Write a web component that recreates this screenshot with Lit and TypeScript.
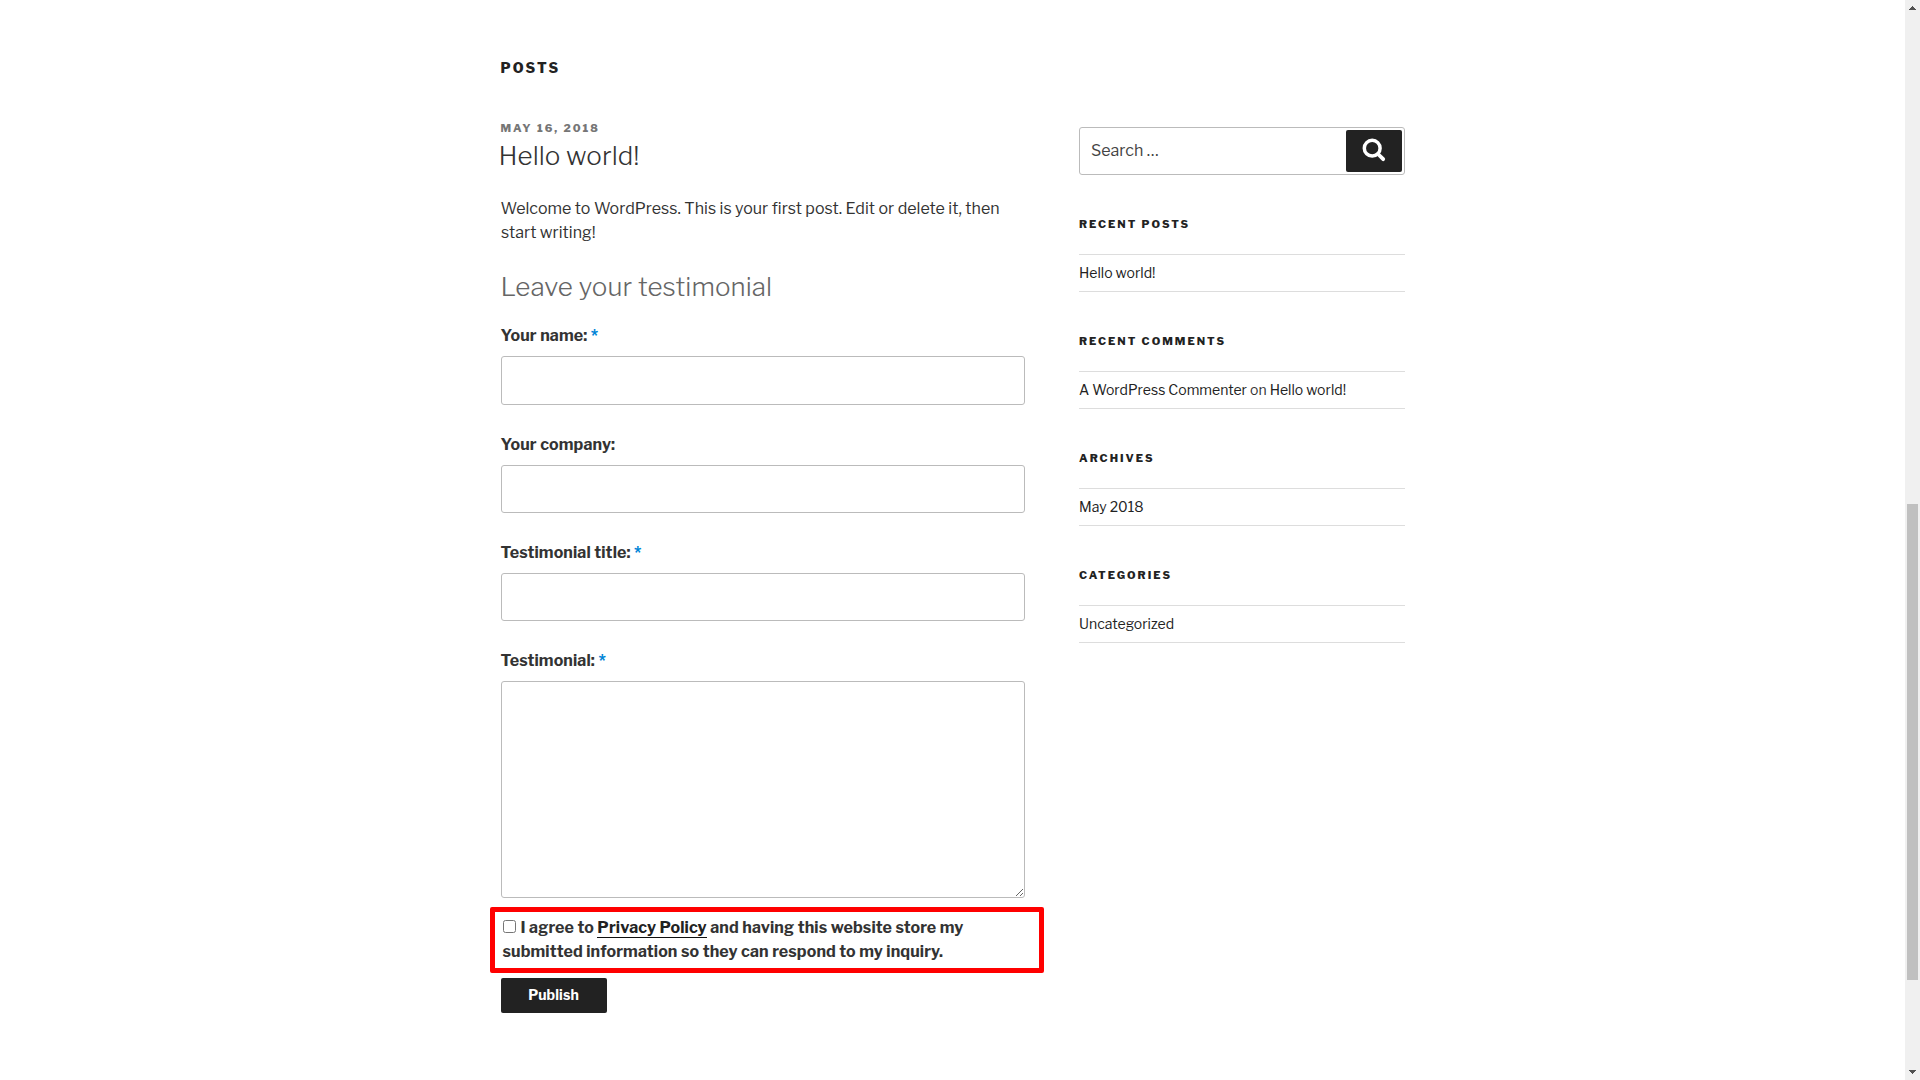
import { LitElement, html, css } from "lit";
import { customElement } from "lit/decorators.js";

const fields = [
  { label: "Your name:", required: true, box: "first" },
  { label: "Your company:", required: false, box: "" },
  { label: "Testimonial title:", required: true, box: "" },
];

const widgets = [
  { title: "Recent Posts", body: html`<a class="link">Hello world!</a>` },
  {
    title: "Recent Comments",
    body: html`<a class="link">A WordPress Commenter</a> on <a class="link">Hello world!</a>`,
  },
  { title: "Archives", body: html`<a class="link">May 2018</a>` },
  { title: "Categories", body: html`<a class="link">Uncategorized</a>` },
];

@customElement("app-root")
export class AppRoot extends LitElement {
  static styles = css`
    :host {
      display: flex;
      height: 1080px;
      overflow: hidden;
      background: #fff;
      color: #333;
      font: 400 16px/24px "Libre Franklin", Inter, "Liberation Sans", sans-serif;
    }
    * { box-sizing: border-box; }
    h2, h3, p { margin: 0; }
    .page { flex: 1; padding: 58px 0 0 501px; }
    .page-title {
      font-size: 14px; line-height: 20px; font-weight: 800; color: #222;
      letter-spacing: 2.15px; text-transform: uppercase; text-indent: -0.5px;
    }
    .columns { display: flex; width: 904px; justify-content: space-between; align-items: flex-start; }
    .primary { width: 524px; padding-top: 42px; white-space: nowrap; text-indent: -0.5px; }
    .date {
      font-size: 11px; line-height: 16px; font-weight: 800; color: #767676;
      letter-spacing: 2px; text-transform: uppercase;
    }
    .entry-title { font-size: 26px; line-height: 36px; font-weight: 300; margin: 2px 0 0 -2px; color: #333; letter-spacing: 0.05px; }
    .copy { margin-top: 23px; letter-spacing: 0.024px; }
    .form-title { font-size: 26px; line-height: 36px; font-weight: 300; color: #666; margin-top: 24px; letter-spacing: 0.07px; }
    .form { margin-top: 19px; display: flex; flex-direction: column; }
    .field { display: flex; flex-direction: column; gap: 8px; margin-bottom: 28px; }
    .label { font-weight: 700; letter-spacing: 0.11px; }
    .req { color: #0085d7; }
    .control {
      display: block; width: 524px; height: 48px; margin: 0; padding: 11px;
      border: 1px solid #bbb; border-radius: 3px; background: #fff; font: inherit; outline: none;
    }
    .first { height: 49px; }
    .area { height: 217px; resize: vertical; }
    .last { margin-bottom: 9px; }
    .consent {
      width: 554px; height: 66px; margin-left: -11px; padding: 4px 0 0 8px;
      border: 5px solid #f00; border-radius: 2px; font-weight: 700; letter-spacing: 0.115px;
    }
    .line { display: flex; align-items: flex-start; height: 24px; }
    .check { width: 13px; height: 13px; margin: 4px 5px 0 0; flex: none; }
    .policy { color: #222; box-shadow: 0 1px 0 #0f0f0f; display: inline-block; height: 21px; vertical-align: top; text-indent: 0; }
    .publish {
      width: 106px; height: 35px; margin-top: 5px; padding: 0 1px 2px 0; border: 0; border-radius: 2px;
      background: #222; color: #fff; font: inherit; font-size: 14px; line-height: 33px; font-weight: 700; letter-spacing: 0.1px;
    }
    .sidebar { width: 326px; padding-top: 49px; white-space: nowrap; }
    .search {
      height: 48px; border: 1px solid #bbb; border-radius: 3px; padding: 2px 2px 2px 11px;
      display: flex; justify-content: space-between; color: #444; line-height: 41px;
    }
    .search-btn {
      width: 56px; height: 42px; border-radius: 2px; background: #222;
      display: flex; align-items: flex-start; justify-content: center; padding-top: 8px;
    }
    .widget { height: 117px; }
    .widgets { padding-top: 41px; }
    .widget-title {
      font-size: 11px; line-height: 16px; font-weight: 800; color: #222;
      letter-spacing: 2.01px; text-transform: uppercase; margin-bottom: 22px;
    }
    .item {
      height: 38px; border: solid #ddd; border-width: 1px 0; font-size: 14px; line-height: 36px; color: #333;
      letter-spacing: 0.015px;
    }
    .link { color: #222; }
    .scrollbar { width: 15px; background: #f0f0f0; display: flex; flex-direction: column; align-items: center; }
    .arrow { display: block; width: 15px; height: 15px; fill: #505050; }
    .thumb { width: 11px; height: 476px; margin: 489px 0 85px; background: #c0c0c0; }
  `;

  render() {
    return html`
      <div class="page">
        <h2 class="page-title">Posts</h2>
        <div class="columns">
          <main class="primary">
            <div class="date">May 16, 2018</div>
            <h3 class="entry-title">Hello world!</h3>
            <p class="copy">Welcome to WordPress. This is your first post. Edit or delete it, then<br />start writing!</p>
            <h2 class="form-title">Leave your testimonial</h2>
            <div class="form">
              ${fields.map(
                (f) => html`<div class="field">
                  <label class="label">${f.label}${f.required ? html` <span class="req">*</span>` : ""}</label>
                  <input class="control ${f.box}" type="text" />
                </div>`
              )}
              <div class="field last">
                <label class="label">Testimonial: <span class="req">*</span></label>
                <textarea class="control area"></textarea>
              </div>
              <div class="consent">
                <div class="line">
                  <input class="check" type="checkbox" /><span>I agree to <a class="policy">Privacy Policy</a> and having this website store my</span>
                </div>
                <div class="line"><span>submitted information so they can respond to my inquiry.</span></div>
              </div>
              <button class="publish">Publish</button>
            </div>
          </main>
          <aside class="sidebar">
            <div class="search">
              <span>Search …</span>
              <div class="search-btn">
                <svg width="24" height="24" viewBox="0 0 24 24" fill="none" stroke="#fff">
                  <circle cx="10.2" cy="10.2" r="7.9" stroke-width="3.5" />
                  <path d="M16 16L21.2 21.2" stroke-width="3.8" stroke-linecap="round" />
                </svg>
              </div>
            </div>
            <div class="widgets">
              ${widgets.map(
                (w) => html`<section class="widget">
                  <h2 class="widget-title">${w.title}</h2>
                  <div class="item">${w.body}</div>
                </section>`
              )}
            </div>
          </aside>
        </div>
      </div>
      <div class="scrollbar">
        <svg class="arrow" viewBox="0 0 15 15" shape-rendering="crispEdges"><path d="M7 6h1v1h1v1h1v1h1v1H4V9h1V8h1V7h1z" /></svg>
        <div class="thumb"></div>
        <svg class="arrow" viewBox="0 0 15 15" shape-rendering="crispEdges"><path d="M4 5h7v1h-1v1H9v1H8v1H7V8H6V7H5V6H4z" /></svg>
      </div>
    `;
  }
}
